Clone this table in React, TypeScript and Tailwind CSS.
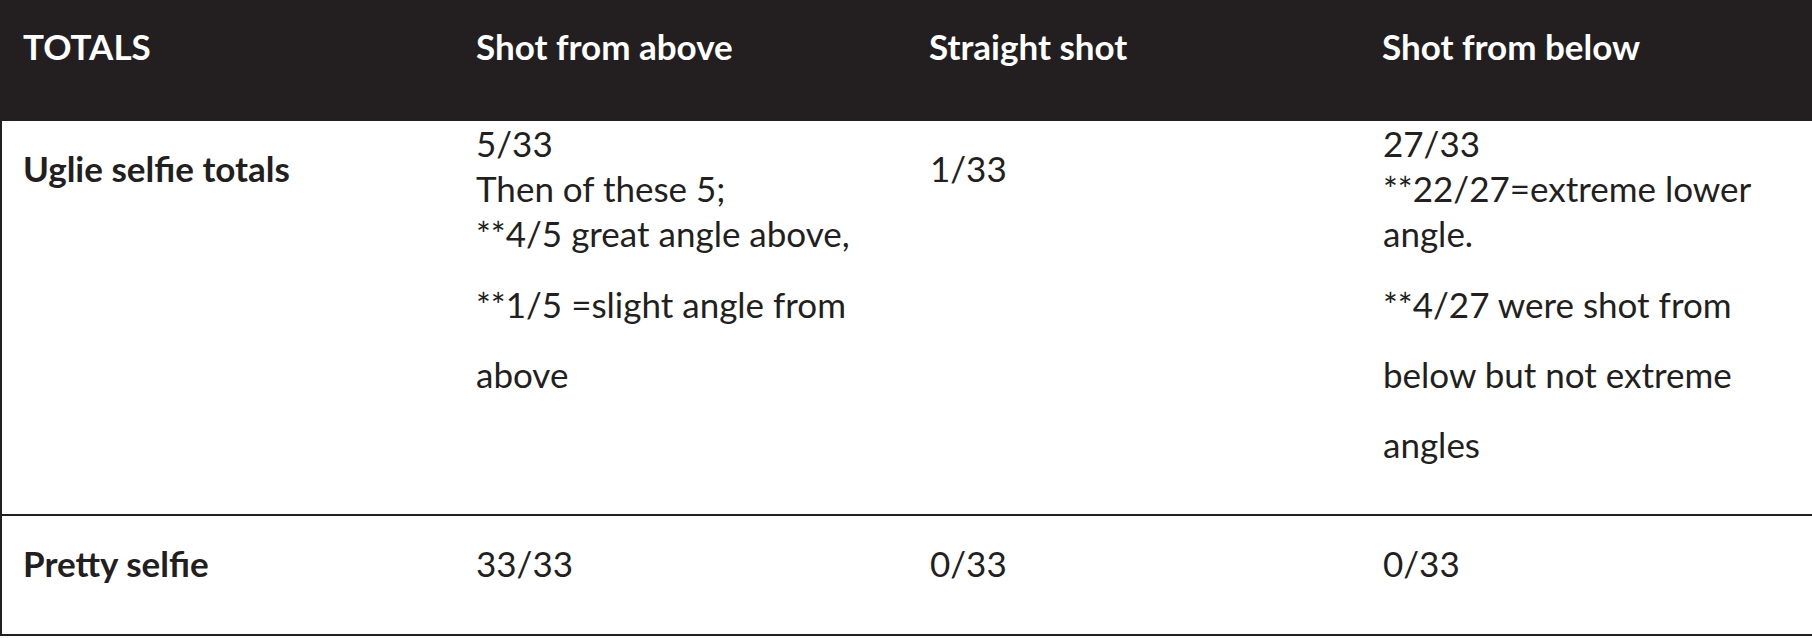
import React from 'react';

const headers = ['TOTALS', 'Shot from above', 'Straight shot', 'Shot from below'];

const cols = 'grid grid-cols-[451px_453px_453px_453px]';

const Line: React.FC<{ children: React.ReactNode; tall?: boolean }> = ({ children, tall }) => (
  <div className={tall ? 'h-[70px] leading-[70px] whitespace-nowrap' : 'h-[45px] leading-[45px] whitespace-nowrap'}>
    {children}
  </div>
);

const App: React.FC = () => {
  return (
    <div
      className="w-[1812px] h-[638px] bg-white text-[#231f20] text-[35px]"
      style={{ fontFamily: 'Lato, "Open Sans", sans-serif' }}
    >
      <div className="border-l-2 border-[#231f20]">
        {/* Header row */}
        <div className={`${cols} h-[121px] bg-[#231f20] text-white font-bold`}>
          {headers.map((h, i) => (
            <div key={h} className={`${i === 0 ? 'pl-[21px]' : 'pl-[23px]'} pt-[24px]`}>
              <Line>{h}</Line>
            </div>
          ))}
        </div>

        {/* Uglie selfie row */}
        <div className={`${cols} h-[393px]`}>
          <div className="pl-[21px] pt-[25px] font-bold">
            <Line>Uglie selfie totals</Line>
          </div>
          <div className="pl-[23px]">
            <Line>5/33</Line>
            <Line>Then of these 5;</Line>
            <Line>**4/5 great angle above,</Line>
            <div className="mt-[13px]">
              <Line tall>**1/5 =slight angle from</Line>
              <Line tall>above</Line>
            </div>
          </div>
          <div className="pl-[24px] pt-[25px]">
            <Line>1/33</Line>
          </div>
          <div className="pl-[24px]">
            <Line>27/33</Line>
            <Line>**22/27=extreme lower</Line>
            <Line>angle.</Line>
            <div className="mt-[13px]">
              <Line tall>**4/27 were shot from</Line>
              <Line tall>below but not extreme</Line>
              <Line tall>angles</Line>
            </div>
          </div>
        </div>

        {/* Pretty selfie row */}
        <div className={`${cols} h-[122px] border-t-2 border-b-2 border-[#231f20]`}>
          <div className="pl-[21px] pt-[25px] font-bold">
            <Line>Pretty selfie</Line>
          </div>
          <div className="pl-[23px] pt-[25px]">
            <Line>33/33</Line>
          </div>
          <div className="pl-[24px] pt-[25px]">
            <Line>0/33</Line>
          </div>
          <div className="pl-[24px] pt-[25px]">
            <Line>0/33</Line>
          </div>
        </div>
      </div>
    </div>
  );
};

export default App;
